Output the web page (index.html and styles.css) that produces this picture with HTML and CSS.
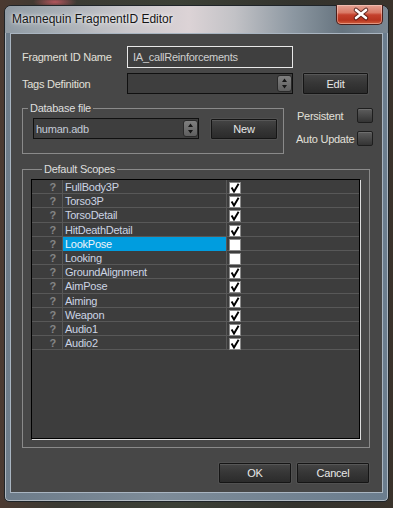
FILE: index.html
```html
<!DOCTYPE html>
<html>
<head>
<meta charset="utf-8">
<link rel="stylesheet" href="styles.css">
</head>
<body>
<div class="window">
  <div class="titlebar">
    <span class="title">Mannequin FragmentID Editor</span>
    <div class="close">
      <svg width="46" height="19" viewBox="0 0 46 19">
        <path d="M19 5 L29 13 M29 5 L19 13" stroke="#3a1410" stroke-width="4.6" stroke-linecap="round" opacity="0.75"/>
        <path d="M19 5 L29 13 M29 5 L19 13" stroke="#ffffff" stroke-width="2.6" stroke-linecap="round"/>
      </svg>
    </div>
  </div>
  <div class="client">
    <div class="row r1">
      <span class="lbl">Fragment ID Name</span>
      <div class="input">IA_callReinforcements</div>
    </div>
    <div class="row r2">
      <span class="lbl">Tags Definition</span>
      <div class="combo"><span class="ctext"></span><span class="spin"><svg width="13" height="15" viewBox="0 0 13 15"><path d="M4 6 L6.5 2.5 L9 6 Z M4 9 L6.5 12.5 L9 9 Z" fill="#151515"/></svg></span></div>
      <button class="btn edit">Edit</button>
    </div>
    <div class="row r3">
      <div class="group db">
        <div class="gtitle">Database file</div>
        <div class="gbody">
          <div class="combo dbc"><span class="ctext">human.adb</span><span class="spin"><svg width="13" height="15" viewBox="0 0 13 15"><path d="M4 6 L6.5 2.5 L9 6 Z M4 9 L6.5 12.5 L9 9 Z" fill="#151515"/></svg></span></div>
          <button class="btn new">New</button>
        </div>
      </div>
      <div class="opts">
        <div class="opt"><span class="olbl p">Persistent</span><span class="dcb"></span></div>
        <div class="opt o2"><span class="olbl">Auto Update</span><span class="dcb"></span></div>
      </div>
    </div>
    <div class="group scopes">
      <div class="gtitle">Default Scopes</div>
      <div class="table">
        <div class="trow"><span class="q">?</span><span class="nm">FullBody3P</span><span class="ck"><span class="cb on"><svg width="10" height="10" viewBox="0 0 10 10"><polyline points="1.6,4.6 4,8.6 8.6,0.8" fill="none" stroke="#000" stroke-width="1.9"/></svg></span></span></div>
        <div class="trow"><span class="q">?</span><span class="nm">Torso3P</span><span class="ck"><span class="cb on"><svg width="10" height="10" viewBox="0 0 10 10"><polyline points="1.6,4.6 4,8.6 8.6,0.8" fill="none" stroke="#000" stroke-width="1.9"/></svg></span></span></div>
        <div class="trow"><span class="q">?</span><span class="nm">TorsoDetail</span><span class="ck"><span class="cb on"><svg width="10" height="10" viewBox="0 0 10 10"><polyline points="1.6,4.6 4,8.6 8.6,0.8" fill="none" stroke="#000" stroke-width="1.9"/></svg></span></span></div>
        <div class="trow"><span class="q">?</span><span class="nm">HitDeathDetail</span><span class="ck"><span class="cb on"><svg width="10" height="10" viewBox="0 0 10 10"><polyline points="1.6,4.6 4,8.6 8.6,0.8" fill="none" stroke="#000" stroke-width="1.9"/></svg></span></span></div>
        <div class="trow"><span class="q">?</span><span class="nm sel">LookPose</span><span class="ck"><span class="cb"></span></span></div>
        <div class="trow"><span class="q">?</span><span class="nm">Looking</span><span class="ck"><span class="cb"></span></span></div>
        <div class="trow"><span class="q">?</span><span class="nm">GroundAlignment</span><span class="ck"><span class="cb on"><svg width="10" height="10" viewBox="0 0 10 10"><polyline points="1.6,4.6 4,8.6 8.6,0.8" fill="none" stroke="#000" stroke-width="1.9"/></svg></span></span></div>
        <div class="trow"><span class="q">?</span><span class="nm">AimPose</span><span class="ck"><span class="cb on"><svg width="10" height="10" viewBox="0 0 10 10"><polyline points="1.6,4.6 4,8.6 8.6,0.8" fill="none" stroke="#000" stroke-width="1.9"/></svg></span></span></div>
        <div class="trow"><span class="q">?</span><span class="nm">Aiming</span><span class="ck"><span class="cb on"><svg width="10" height="10" viewBox="0 0 10 10"><polyline points="1.6,4.6 4,8.6 8.6,0.8" fill="none" stroke="#000" stroke-width="1.9"/></svg></span></span></div>
        <div class="trow"><span class="q">?</span><span class="nm">Weapon</span><span class="ck"><span class="cb on"><svg width="10" height="10" viewBox="0 0 10 10"><polyline points="1.6,4.6 4,8.6 8.6,0.8" fill="none" stroke="#000" stroke-width="1.9"/></svg></span></span></div>
        <div class="trow"><span class="q">?</span><span class="nm">Audio1</span><span class="ck"><span class="cb on"><svg width="10" height="10" viewBox="0 0 10 10"><polyline points="1.6,4.6 4,8.6 8.6,0.8" fill="none" stroke="#000" stroke-width="1.9"/></svg></span></span></div>
        <div class="trow"><span class="q">?</span><span class="nm">Audio2</span><span class="ck"><span class="cb on"><svg width="10" height="10" viewBox="0 0 10 10"><polyline points="1.6,4.6 4,8.6 8.6,0.8" fill="none" stroke="#000" stroke-width="1.9"/></svg></span></span></div>
      </div>
    </div>
    <div class="footer">
      <button class="btn fb">OK</button>
      <button class="btn fb">Cancel</button>
    </div>
  </div>
</div>
</body>
</html>
```
FILE: styles.css
```css
* { box-sizing: border-box; }
html, body { margin: 0; padding: 0; }
body {
  width: 393px;
  height: 508px;
  overflow: hidden;
  font-family: "Liberation Sans", Arial, sans-serif;
  font-size: 11px;
  background:
    radial-gradient(ellipse 22px 6px at 55px 2px, rgba(200,90,100,0.85), rgba(200,90,100,0) 100%),
    linear-gradient(90deg, #4b3a31 0%, #3b3a33 15%, #3c4036 45%, #34342e 75%, #3a332b 100%);
}
.window {
  margin: 5px 0 0 4px;
  width: 385px;
  height: 497px;
  border: 1px solid #1f2428;
  border-radius: 7px 7px 5px 5px;
  background: linear-gradient(90deg, #6d7c8a 0%, #7d8b98 40%, #6b7d8e 100%);
  box-shadow: inset 0 0 0 1px rgba(255,255,255,0.45);
  display: flex;
  flex-direction: column;
}
.titlebar {
  height: 27px;
  display: flex;
  justify-content: space-between;
  align-items: flex-start;
  border-radius: 6px 6px 0 0;
  background: linear-gradient(90deg, #8f9aa3 0%, #a3abb2 12%, #c9c7cb 32%, #dcd3d6 48%, #c2c2c6 60%, #8d98a2 75%, #66747f 88%, #7b8894 100%);
}
.title {
  padding-left: 7px;
  line-height: 27px;
  font-size: 12px;
  color: #151515;
  text-shadow: 0 0 6px rgba(255,255,255,0.9), 0 0 3px rgba(255,255,255,0.8);
}
.close {
  margin: -1px 5px 0 0;
  width: 47px;
  height: 20px;
  border: 1px solid #4a1e1a;
  border-top: none;
  border-radius: 0 0 5px 5px;
  background: linear-gradient(180deg, #e6a394 0%, #d97a66 40%, #c4412d 52%, #b8351f 80%, #d2603e 100%);
  box-shadow: inset 0 0 0 1px rgba(255,220,210,0.45);
}
.close svg { display: block; }
.client {
  margin: 0 5px;
  height: 460px;
  background: #474747;
  border: 1px solid #a9b5c1;
  display: flex;
  flex-direction: column;
  color: #e2e0da;
  letter-spacing: -0.25px;
}
.row { display: flex; align-items: center; }
.r1 { margin: 12px 0 0 11px; height: 22px; }
.r2 { margin: 5px 0 0 11px; height: 21px; }
.lbl { width: 105px; }
.input {
  width: 166px;
  height: 22px;
  border: 1px solid #e8e8e8;
  background: #3f3f3f;
  color: #cfcfcf;
  padding-left: 5px;
  line-height: 20px;
}
.combo {
  width: 166px;
  height: 21px;
  border: 1px solid #101010;
  background: #3e3e3e;
  display: flex;
  justify-content: space-between;
  align-items: center;
  padding: 0 0 0 2px;
}
.ctext { color: #c4cbd8; }
.spin {
  width: 15px;
  height: 17px;
  border: 1px solid #2a2a2a;
  border-radius: 3px;
  background: linear-gradient(180deg, #7f7f7f, #5f5f5f);
  display: flex;
  align-items: center;
  justify-content: center;
}
.spin svg { display: block; }
.btn {
  font-family: "Liberation Sans", Arial, sans-serif;
  font-size: 11px;
  letter-spacing: -0.2px;
  color: #e8e8e8;
  background: linear-gradient(180deg, #454545 0%, #373737 45%, #2b2b2b 100%);
  border: 1px solid #151515;
  box-shadow: inset 0 1px 0 rgba(255,255,255,0.1), 0 0 0 1px rgba(255,255,255,0.06);
  border-radius: 1px;
  padding: 0;
  margin: 0;
}
.edit { margin-left: 10px; width: 65px; height: 21px; }
.r3 { margin: 14px 0 0 11px; align-items: flex-start; }
.group { border: 1px solid #8a8a8a; }
.gtitle {
  display: table;
  line-height: 13px;
  padding: 0 2px;
  background: #474747;
  color: #dedede;
  margin-top: -7px;
}
.db { width: 262px; height: 46px; padding-left: 10px; }
.db .gtitle { margin-left: -5px; }
.gbody { margin-top: 3px; display: flex; align-items: center; gap: 12px; }
.dbc { width: 166px; }
.new { width: 66px; height: 20px; }
.opts { margin-left: 12px; width: 77px; }
.opt { display: flex; justify-content: space-between; align-items: center; height: 15px; }
.o2 { margin-top: 8px; }
.olbl { color: #e2e0da; }
.olbl.p { padding-left: 1px; }
.dcb {
  width: 16px;
  height: 15px;
  border: 1px solid #1e1e1e;
  border-radius: 2px;
  background: linear-gradient(180deg, #5d5d5d, #343434);
  box-shadow: inset 0 1px 0 rgba(255,255,255,0.12);
}
.scopes {
  margin: 15px 0 0 11px;
  width: 348px;
  height: 279px;
  padding: 0 9px 8px 8px;
}
.scopes .gtitle { margin-left: 11px; }
.table {
  margin-top: 3px;
  width: 329px;
  height: 260px;
  border: 1px solid #000;
  background: #3d3d3d;
  box-shadow: 1px 1px 0 #dcdcdc;
}
.trow {
  display: grid;
  grid-template-columns: 31px 164px 1fr;
  height: 14.2px;
  border-bottom: 1px solid #585858;
}
.q {
  border-right: 1px solid #585858;
  text-align: right;
  padding: 1px 6px 0 0;
  line-height: 12px;
  font-weight: bold;
  color: #858585;
}
.nm {
  border-right: 1px solid #585858;
  padding: 1px 0 0 2px;
  line-height: 12px;
  color: #ccd4e4;
}
.nm.sel { background: #009ddf; color: #eef4fa; }
.ck { display: flex; align-items: flex-start; }
.cb {
  margin: 2px 0 0 2px;
  width: 12px;
  height: 12px;
  border: 1px solid #8a8a8a;
  background: #ffffff;
}
.cb svg { display: block; }
.footer {
  margin-top: 15px;
  display: flex;
  justify-content: flex-end;
  gap: 6px;
  padding-right: 13px;
}
.fb { width: 72px; height: 20px; }
```
